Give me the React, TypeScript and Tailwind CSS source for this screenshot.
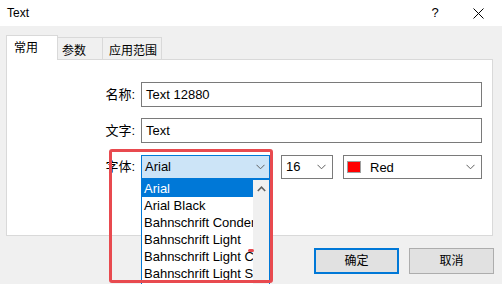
import React from 'react'

const FONT_UI = "font-['Liberation_Sans','Noto_Sans_CJK_SC',sans-serif]"

const Chevron = ({ className = '' }: { className?: string }) => (
    <svg width="9" height="6" viewBox="0 0 9 6" className={className}>
        <path d="M0.5 0.8 L4.5 4.8 L8.5 0.8" fill="none" stroke="#606060" strokeWidth="1" />
    </svg>
)

const TextField = ({ label, value }: { label: string, value: string }) => (
    <div className="flex items-center h-[25px]">
        <span className="w-[134px] text-right pr-[6px] text-[13px] text-black">{label}</span>
        <div className="w-[341px] h-[25px] border border-[#7a7a7a] bg-white flex items-center pl-[4px] text-[13px] text-black">
            {value}
        </div>
    </div>
)

const fontItems = [
    'Arial',
    'Arial Black',
    'Bahnschrift Condensed',
    'Bahnschrift Light',
    'Bahnschrift Light Condensed',
    'Bahnschrift Light SemiCondensed',
]

const FontDropdown = () => (
    <div className="absolute left-[141px] top-[179px] w-[129px] h-[110px] bg-white border border-[#0078d7] overflow-hidden flex">
        <ul className="flex-1 min-w-0 overflow-hidden">
            {fontItems.map((item, i) => (
                <li
                    key={item}
                    className={`h-[17px] leading-[17px] pl-[2px] text-[13px] whitespace-nowrap overflow-hidden text-clip ${i === 0 ? 'bg-[#0078d7] text-white' : 'text-black'}`}
                >
                    {item}
                </li>
            ))}
        </ul>
        {/* scrollbar */}
        <div className="w-[16px] shrink-0 bg-[#f0f0f0] flex flex-col items-center">
            <svg width="9" height="6" viewBox="0 0 9 6" className="mt-[6px]">
                <path d="M0.8 5 L4.5 1.2 L8.2 5" fill="none" stroke="#606060" strokeWidth="1.6" />
            </svg>
        </div>
    </div>
)

const App = () => {
    return (
        <div className={`w-[502px] h-[284px] relative overflow-hidden flex flex-col bg-[#f0f0f0] ${FONT_UI}`}>
            {/* title bar */}
            <div className="h-[26px] bg-white flex items-center pl-[7px] text-[12px] text-black">
                <span className="flex-1">Text</span>
                <span className="w-[18px] text-center text-[13px] mr-[29px]">?</span>
                <svg width="11" height="11" viewBox="0 0 11 11" className="mr-[18px]">
                    <path d="M0.5 0.5 L10.5 10.5 M10.5 0.5 L0.5 10.5" stroke="#000" strokeWidth="1" />
                </svg>
            </div>

            {/* tabs */}
            <div className="pl-[6px] flex items-end h-[33px]">
                <div className="w-[52px] h-[25px] bg-white border border-b-0 border-[#d9d9d9] text-[12px] pl-[7px] pt-[3px] relative z-10 -mb-px">
                    常用
                </div>
                <div className="w-[45px] h-[22px] border border-l-0 border-b-0 border-[#d9d9d9] text-[12px] pl-[4px] pt-[4px]">
                    参数
                </div>
                <div className="w-[59px] h-[22px] border border-l-0 border-b-0 border-[#d9d9d9] text-[12px] pl-[6px] pt-[4px]">
                    应用范围
                </div>
            </div>

            {/* tab panel */}
            <div className="ml-[6px] w-[487px] h-[177px] bg-white border border-[#d9d9d9] pt-[22px] flex flex-col gap-[11px]">
                <TextField label="名称:" value="Text 12880" />
                <TextField label="文字:" value="Text" />
                <div className="flex items-center h-[24px] mt-[1px]">
                    <span className="w-[134px] text-right pr-[6px] text-[13px] text-black">字体:</span>
                    <div className="w-[129px] h-[24px] border border-[#0078d7] bg-[#cce4f7] flex items-center pl-[3px] pr-[4px] text-[13px]">
                        <span className="flex-1">Arial</span>
                        <Chevron />
                    </div>
                    <div className="ml-[11px] w-[52px] h-[24px] border border-[#7a7a7a] bg-white flex items-center pl-[4px] pr-[6px] text-[13px]">
                        <span className="flex-1">16</span>
                        <Chevron />
                    </div>
                    <div className="ml-[10px] w-[139px] h-[24px] border border-[#7a7a7a] bg-white flex items-center pl-[3px] pr-[6px] text-[13px]">
                        <span className="w-[14px] h-[12px] bg-[#ff0000] border border-[#a0a0a0] mr-[9px]" />
                        <span className="flex-1 pt-[2px]">Red</span>
                        <Chevron />
                    </div>
                </div>
            </div>

            {/* buttons */}
            <div className="flex justify-end gap-[10px] pr-[8px] pt-[12px]">
                <button className="w-[85px] h-[26px] bg-[#e1e1e1] border-2 border-[#0078d7] text-[12px] text-black">确定</button>
                <button className="w-[85px] h-[26px] bg-[#e1e1e1] border border-[#adadad] text-[12px] text-black">取消</button>
            </div>

            <FontDropdown />

            {/* annotation overlay */}
            <div className="absolute left-[109px] top-[149px] w-[164px] h-[134px] border-[3px] border-[#e84a4f] rounded-[3px] pointer-events-none" />
            <div className="absolute left-[248px] top-[249px] w-[6px] h-[3px] rounded-full bg-[#e84a4f]" />
        </div>
    )
}

export default App
